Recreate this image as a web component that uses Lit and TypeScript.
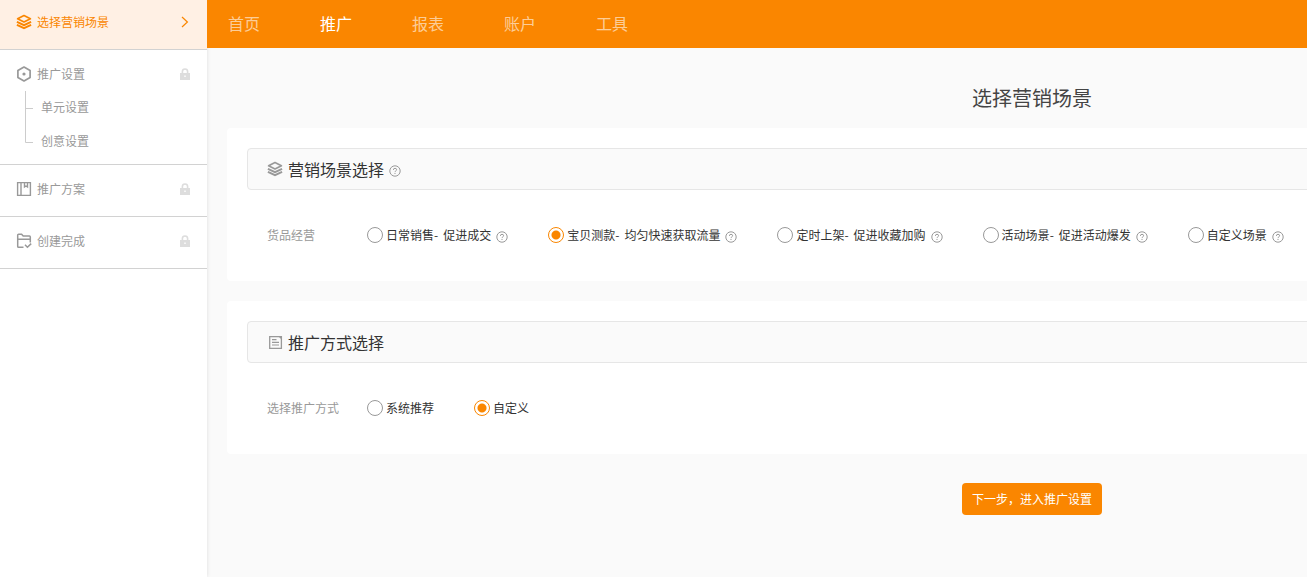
import { LitElement, html, svg, css, nothing } from "lit";
import { customElement, property, state } from "lit/decorators.js";
import { classMap } from "lit/directives/class-map.js";

const layers = svg`
  <path d="M8 1.6 14.4 4.8 8 8 1.6 4.8Z" fill="none" stroke="currentColor" stroke-width="1.7" stroke-linejoin="round"/>
  <path d="M0.9 7.9 8 11.2 15.1 7.9M0.9 10.8 8 14.2 15.1 10.8" fill="none" stroke="currentColor" stroke-width="1.9"/>`;

const icons: Record<string, unknown> = {
  layers,
  hexagon: svg`
    <path d="M8 1 14.1 4.5V11.5L8 15 1.9 11.5V4.5Z" fill="none" stroke="currentColor" stroke-width="1.7" stroke-linejoin="round"/>
    <circle cx="8" cy="8" r="1.6" fill="currentColor"/>`,
  board: svg`
    <path d="M1.6 1.6H14.4V14.4H1.6ZM5 2V14M8.5 2V6L10 5 11.5 6V2" fill="none" stroke="currentColor" stroke-width="1.4"/>`,
  folder: svg`
    <path d="M7.5 14.3H2.6Q1.7 14.3 1.7 13.4V2.1Q1.7 1.2 2.6 1.2H5.6L7.2 3H13.4Q14.3 3 14.3 3.9V9.5M2 6.2H14M9 11.8 11.4 14.2 15.2 10.6" fill="none" stroke="currentColor" stroke-width="1.5"/>`,
  note: svg`
    <path d="M2.7 2.6H14.4V14.4H2.7Z" fill="none" stroke="currentColor" stroke-width="1.3"/>
    <path d="M11 2H15V6ZM5 5H9.5V6.2H5ZM5 7.7H12V8.9H5ZM5 10.4H12V11.6H5Z" fill="currentColor"/>`,
};

const icon = (name: string) =>
  html`<svg width="16" height="16" viewBox="0 0 16 16" aria-hidden="true">${icons[name]}</svg>`;

const help = html`<svg class="help" width="12" height="12" viewBox="0 0 12 12" role="img" aria-label="帮助">
  <circle cx="6" cy="6" r="5.2" fill="none" stroke="currentColor" stroke-width="1"/>
  <path d="M4.4 4.9Q4.4 3.3 6 3.3 7.6 3.3 7.6 4.7 7.6 5.4 6.8 5.9 6 6.4 6 7.1M6 8V9" fill="none" stroke="currentColor" stroke-width="1"/>
</svg>`;

interface Step {
  icon: string;
  label: string;
  children?: string[];
}

interface Option {
  name: string;
  goal?: string;
  help?: boolean;
}

@customElement("step-nav")
export class StepNav extends LitElement {
  @property({ type: Number }) current = 0;

  private steps: Step[] = [
    { icon: "layers", label: "选择营销场景" },
    { icon: "hexagon", label: "推广设置", children: ["单元设置", "创意设置"] },
    { icon: "board", label: "推广方案" },
    { icon: "folder", label: "创建完成" },
  ];

  static styles = css`
    :host { display: block; background: #fff; box-shadow: 0 0 4px rgba(0, 0, 0, 0.12); }
    nav { margin-top: -2px; }
    ol, ul { list-style: none; margin: 0; padding: 0; }
    .step { border-bottom: 1px solid #d2d2d2; color: #999; font-size: 12px; }
    .step.current { background: #fff0e4; color: #fa8600; }
    .row { display: flex; align-items: center; gap: 5px; height: 20px; padding: 14px 17px 17px 16px; }
    .row.parent { padding-bottom: 0; }
    .row a { flex: 1; color: inherit; text-decoration: none; line-height: 20px; }
    .lock { color: #ddd; }
    .children { display: flex; gap: 7px; padding: 6px 0 6px 25px; }
    .children li { height: 34px; line-height: 34px; }
    .tree { color: #ccc; }
  `;

  render() {
    return html`<nav aria-label="步骤">
      <ol>
        ${this.steps.map((s, i) => {
          const current = i === this.current;
          return html`<li class=${classMap({ step: true, current })}>
            <div class=${classMap({ row: true, parent: !!s.children })}>
              ${icon(s.icon)}
              <a href="#step-${i}">${s.label}</a>
              ${current
                ? html`<svg width="10" height="12" viewBox="0 0 10 12" aria-hidden="true">
                    <path d="M2 1 7.4 6 2 11" fill="none" stroke="currentColor" stroke-width="1.2"/>
                  </svg>`
                : html`<svg class="lock" width="10" height="12" viewBox="0 0 10 12" aria-hidden="true">
                    <path d="M0 5H1.6V3.6A3.4 3.4 0 0 1 8.4 3.6V5H10V12H0ZM3.2 5H6.8V3.6A1.8 1.8 0 0 0 3.2 3.6ZM4.3 7.6V9H5.7V7.6Z" fill="currentColor" fill-rule="evenodd"/>
                  </svg>`}
            </div>
            ${s.children
              ? html`<div class="children">
                  <svg class="tree" width="9" height="54" viewBox="0 0 9 54" aria-hidden="true">
                    <path d="M0.5 1V52.5H8M0.5 18.5H8" fill="none" stroke="currentColor"/>
                  </svg>
                  <ul>${s.children.map((c) => html`<li>${c}</li>`)}</ul>
                </div>`
              : nothing}
          </li>`;
        })}
      </ol>
    </nav>`;
  }
}

@customElement("option-panel")
export class OptionPanel extends LitElement {
  @property() icon = "layers";
  @property() heading = "";
  @property() label = "";
  @property({ type: Boolean }) hint = false;
  @property({ attribute: false }) options: Option[] = [];
  @property({ type: Number }) selected = 0;

  static styles = css`
    :host { display: block; background: #fff; border-radius: 4px; padding: 20px; }
    .head {
      display: flex; align-items: center; gap: 5px; box-sizing: border-box; height: 42px;
      padding: 0 19px; border: 1px solid #e6e6e6; border-radius: 4px; background: #fafafa; color: #999;
    }
    h2 { margin: 0; font-size: 16px; font-weight: 400; line-height: 24px; color: #333; }
    .help { flex: none; color: #999; margin-top: 3px; }
    .group { display: flex; align-items: center; padding: 35px 20px 16px; font-size: 12px; line-height: 20px; }
    .caption { width: 100px; color: #999; }
    .options { display: flex; gap: 40px; }
    .option { display: flex; align-items: center; gap: 5px; }
    label { display: flex; align-items: center; gap: 3px; color: #333; white-space: nowrap; }
    .goal { margin-left: 5px; }
    input {
      appearance: none; box-sizing: border-box; flex: none; width: 16px; height: 16px; margin: 0;
      border: 1px solid #999; border-radius: 50%; background: #fff;
    }
    input:checked {
      border-color: #fa8600;
      background: radial-gradient(circle, #fa8600 4px, #fff 5px);
    }
  `;

  render() {
    return html`
      <div class="head">
        ${icon(this.icon)}
        <h2>${this.heading}</h2>
        ${this.hint ? help : nothing}
      </div>
      <div class="group" role="radiogroup" aria-labelledby="caption">
        <span class="caption" id="caption">${this.label}</span>
        <div class="options">
          ${this.options.map(
            (o, i) => html`<div class="option">
              <label for="option-${i}">
                <input type="radio" name="option" id="option-${i}"
                  .checked=${i === this.selected}
                  @change=${() => { this.selected = i; }}>
                <span>${o.name}${o.goal ? html`-<span class="goal">${o.goal}</span>` : nothing}</span>
              </label>
              ${o.help ? help : nothing}
            </div>`
          )}
        </div>
      </div>`;
  }
}

@customElement("app-root")
export class AppRoot extends LitElement {
  @state() private tab = 1;

  private tabs = ["首页", "推广", "报表", "账户", "工具"];

  private scenes: Option[] = [
    { name: "日常销售", goal: "促进成交", help: true },
    { name: "宝贝测款", goal: "均匀快速获取流量", help: true },
    { name: "定时上架", goal: "促进收藏加购", help: true },
    { name: "活动场景", goal: "促进活动爆发", help: true },
    { name: "自定义场景", help: true },
  ];

  private methods: Option[] = [{ name: "系统推荐" }, { name: "自定义" }];

  static styles = css`
    :host {
      display: grid; grid-template-columns: 207px minmax(0, 1fr); min-height: 100vh;
      overflow: hidden; background: #fafafa; color: #333;
      font: 12px/20px "Noto Sans CJK SC", sans-serif;
    }
    step-nav { z-index: 1; }
    header { background: #fa8600; height: 48px; position: relative; z-index: 2; }
    .tabs { display: flex; gap: 60px; padding: 0 21px; }
    .tabs a { color: rgba(255, 255, 255, 0.6); font-size: 16px; line-height: 46px; text-decoration: none; }
    .tabs a.active { color: #fff; }
    main { display: flex; flex-direction: column; min-width: 1610px; padding: 0 20px 30px; }
    h1 { margin: 0; padding: 35px 0 15px; font-size: 20px; font-weight: 400; line-height: 30px; text-align: center; color: #444; }
    .panels { display: grid; gap: 20px; }
    button {
      align-self: center; margin-top: 29px; height: 32px; padding: 0 10px; border: 0; border-radius: 4px;
      background: #fa8600; color: #fff; font: inherit;
    }
  `;

  render() {
    return html`
      <step-nav .current=${0}></step-nav>
      <div>
        <header>
          <nav class="tabs" aria-label="主导航">
            ${this.tabs.map(
              (t, i) => html`<a href="#tab-${i}" class=${classMap({ active: i === this.tab })}
                @click=${() => { this.tab = i; }}>${t}</a>`
            )}
          </nav>
        </header>
        <main>
          <h1>选择营销场景</h1>
          <div class="panels">
            <option-panel icon="layers" heading="营销场景选择" label="货品经营" hint
              .options=${this.scenes} .selected=${1}></option-panel>
            <option-panel icon="note" heading="推广方式选择" label="选择推广方式"
              .options=${this.methods} .selected=${1}></option-panel>
          </div>
          <button type="button">下一步，进入推广设置</button>
        </main>
      </div>`;
  }
}
